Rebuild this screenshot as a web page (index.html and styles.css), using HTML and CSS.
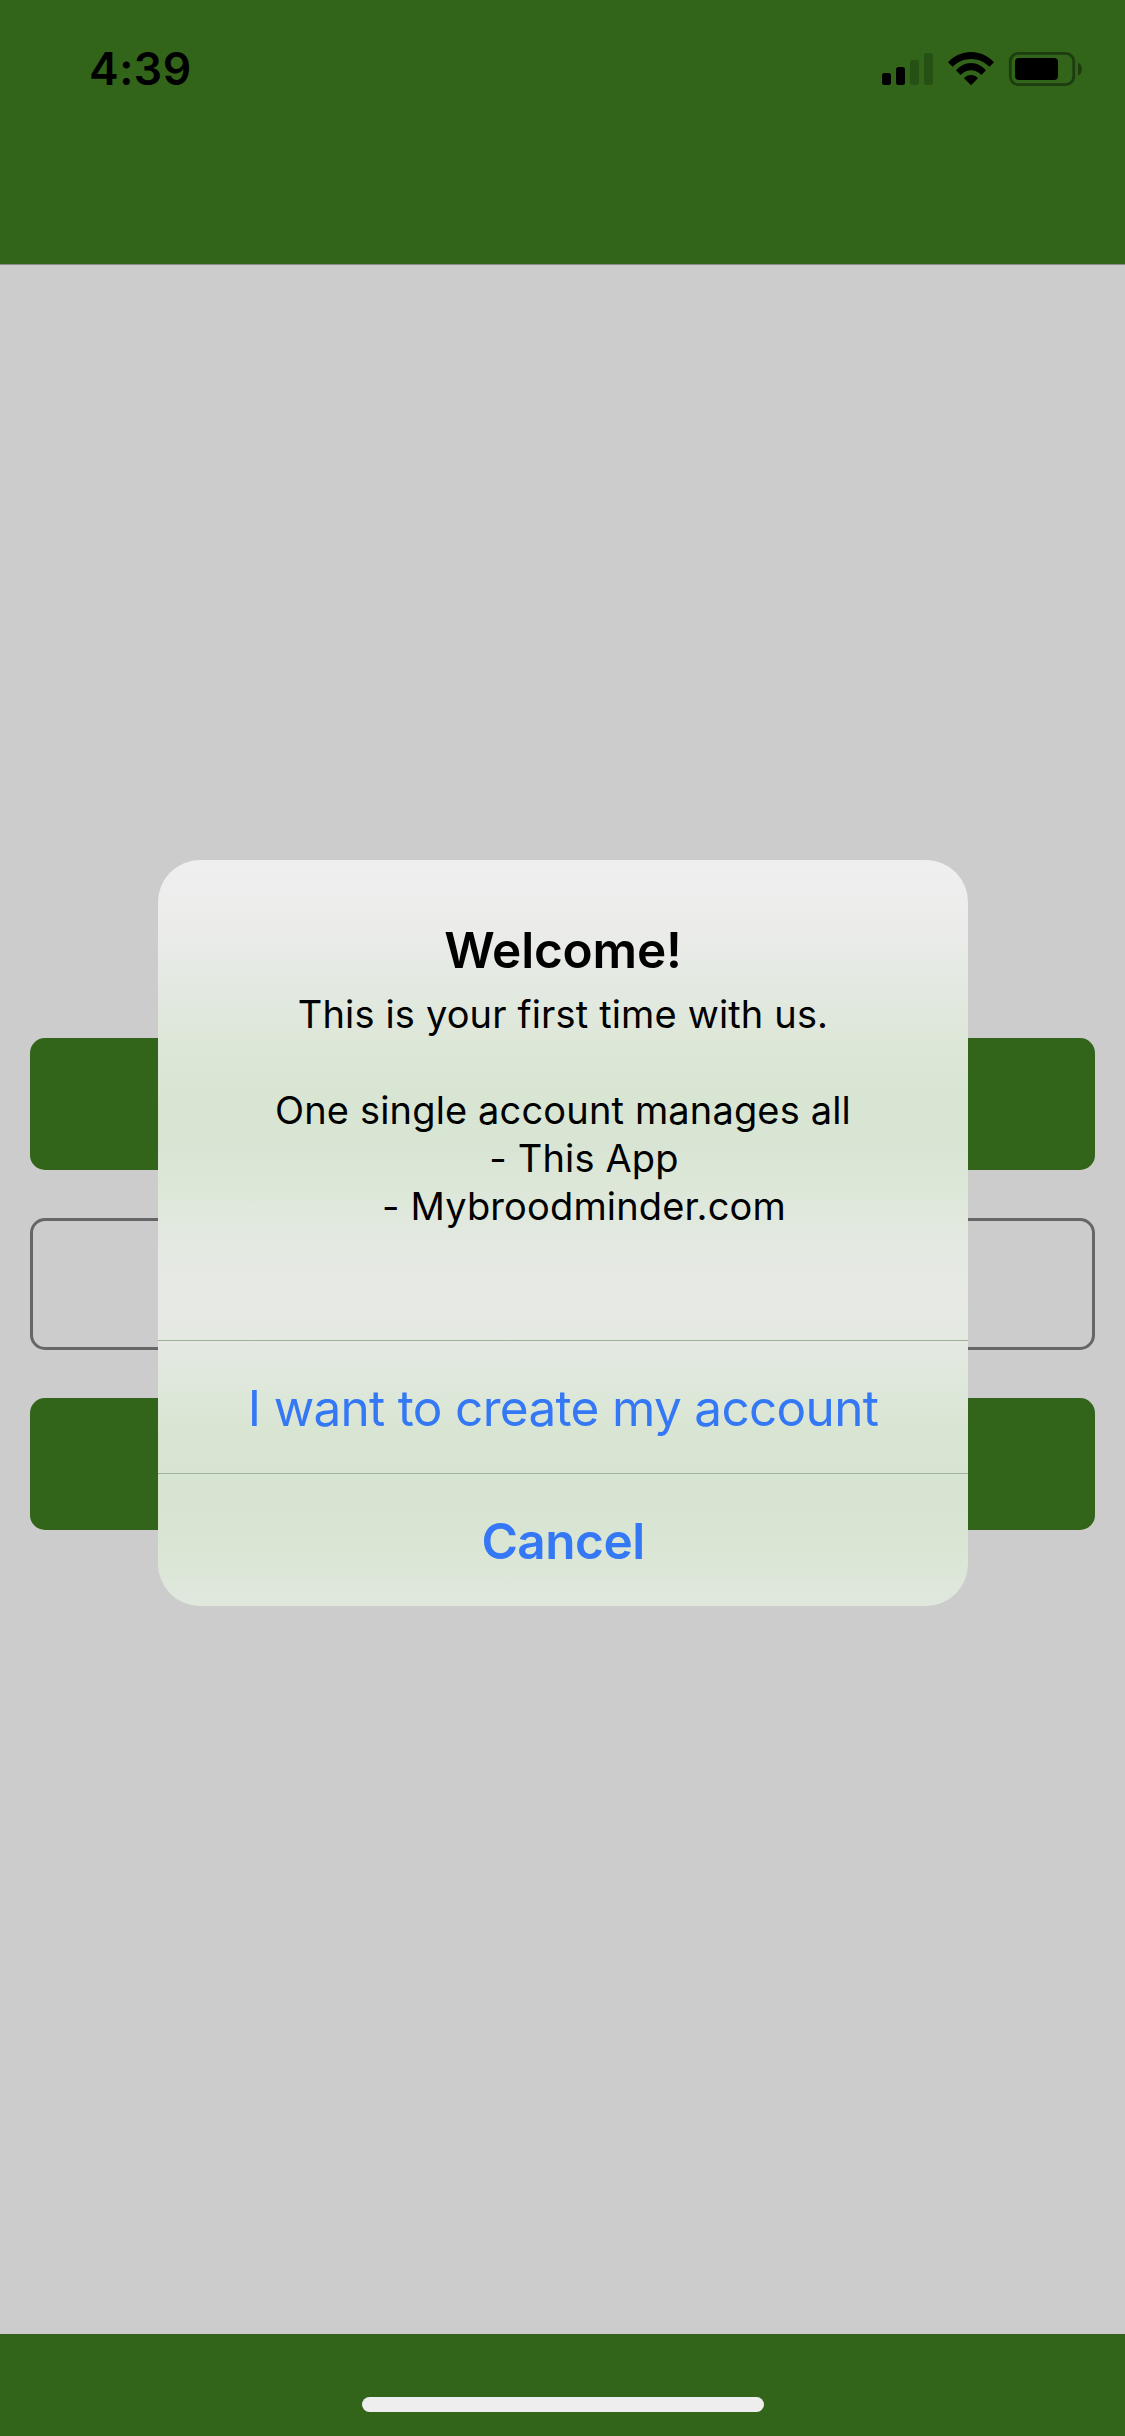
FILE: index.html
```html
<!DOCTYPE html>
<html lang="en">
<head>
<meta charset="utf-8">
<title>Welcome</title>
<link rel="stylesheet" href="styles.css">
</head>
<body>
<div class="screen">
  <header class="header">
    <div class="status">
      <span class="time">4:39</span>
      <svg class="status-icons" width="204" height="40" viewBox="880 50 204 40">
        <rect x="882" y="73" width="9" height="12" rx="2.5"/>
        <rect x="896" y="67" width="9" height="18" rx="2.5"/>
        <g opacity=".2">
          <rect x="910" y="60" width="9" height="25" rx="2.5"/>
          <rect x="924" y="53" width="9" height="32" rx="2.5"/>
        </g>
        <path d="M948 62.200C954.500 55.600 962.500 52 971 52S987.500 55.600 994 62.200L989.400 66.800C984.300 61.700 977.800 59 971 59S957.700 61.700 952.600 66.800Z"/>
        <path d="M956 70.300C960.200 65.900 965.400 63.100 971 63.100S981.800 65.900 986 70.300L981.400 74.900C978.500 71.900 974.900 70.200 971 70.200S963.500 71.900 960.600 74.900Z"/>
        <path d="M964 78.300C966 76.100 968.400 75 971 75S976 76.100 978 78.300L971 85.300Z"/>
        <g opacity=".4">
          <rect x="1010.300" y="53.300" width="63.400" height="31.400" rx="8" fill="none" stroke="#000" stroke-width="2.800"/>
          <path d="M1078 62.500C1080.600 64 1082 66.300 1082 69.200S1080.600 74.300 1078 75.800Z"/>
        </g>
        <rect x="1015" y="58" width="43" height="22" rx="4"/>
      </svg>
    </div>
  </header>
  <main class="content">
    <div class="btn"></div>
    <div class="btn btn-outline"></div>
    <div class="btn"></div>
  </main>
  <footer class="footer"><div class="home-indicator"></div></footer>

  <section class="dialog" role="dialog">
    <div class="dialog-body">
      <h1 class="title">Welcome!</h1>
      <p class="message intro">This is your first time with us.</p>
      <p class="message accounts">One single account manages all</p>
      <p class="message item">- This App</p>
      <p class="message item">- Mybroodminder.com</p>
    </div>
    <div class="action">I want to create my account</div>
    <div class="action cancel">Cancel</div>
  </section>
</div>
</body>
</html>
```
FILE: styles.css
```css
* { box-sizing: border-box; }

body {
  margin: 0;
  font-family: Inter, "Liberation Sans", sans-serif;
  color: #000;
}

.screen {
  position: relative;
  display: flex;
  flex-direction: column;
  width: 1125px;
  height: 2436px;
  background: #ccc;
  overflow: hidden;
}

.header {
  height: 265px;
  background: #32651a;
  border-bottom: 1px solid #8b8b8b;
}

.status {
  display: flex;
  justify-content: space-between;
  padding: 50px 41px 0 89px;
}

.time {
  height: 40px;
  font-size: 44.5px;
  font-weight: 600;
  line-height: 39px;
  letter-spacing: 0.5px;
}

.status-icons { display: block; }

.content {
  flex: 1;
  display: flex;
  flex-direction: column;
  gap: 48px;
  padding: 773px 30px 0;
}

.btn {
  height: 132px;
  border-radius: 15px;
  background: #32651a;
}

.btn-outline {
  background: none;
  border: 3px solid #666;
}

.footer {
  display: flex;
  justify-content: center;
  height: 102px;
  padding-top: 63px;
  background: #32651a;
}

.home-indicator {
  width: 402px;
  height: 15px;
  border-radius: 8px;
  background: #eee;
}

.dialog {
  position: absolute;
  top: 860px;
  left: 158px;
  width: 810px;
  height: 746px;
  border-radius: 42px;
  text-align: center;
  background: linear-gradient(
    #efefef 0, #ebecea 70px, #e3e9e1 130px, #dde7d8 180px, #d8e5d3 240px,
    #d9e5d4 290px, #dee8da 340px, #e4e9e2 385px, #e7eae4 440px, #e4e9e2 480px,
    #dfe8dc 520px, #d9e5d3 570px, #d7e4d1 640px, #dbe6d6 700px, #e0e8de 746px);
}

.dialog-body {
  height: 480px;
  padding-top: 60px;
}

.title {
  margin: 0;
  font-size: 49.5px;
  font-weight: 600;
  line-height: 60px;
  letter-spacing: -0.2px;
}

.message {
  margin: 0;
  font-size: 38px;
  line-height: 48px;
  letter-spacing: 0.15px;
}

.intro { margin-top: 10px; }
.accounts { margin-top: 48px; }
.item { padding-left: 42px; }

.action {
  height: 133px;
  border-top: 1px solid #a0b199;
  font-size: 49.5px;
  line-height: 134px;
  letter-spacing: -0.69px;
  color: #3478f6;
}

.cancel {
  font-weight: 600;
  letter-spacing: -0.5px;
}
```
